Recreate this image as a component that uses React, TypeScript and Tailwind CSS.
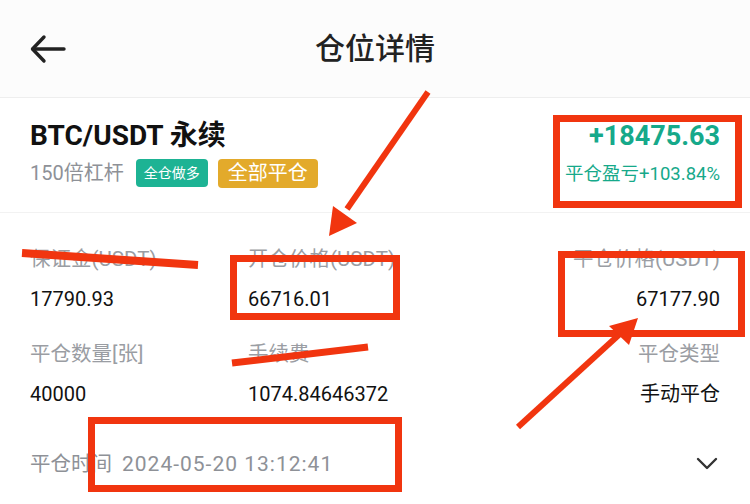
import React from "react";

const font = { fontFamily: "Roboto, 'Noto Sans CJK SC', sans-serif" };

function Cell({ label, value, align = "left", w }: { label: string; value: string; align?: "left" | "right"; w?: string }) {
  return (
    <div className={`${w ?? ""} flex flex-col ${align === "right" ? "items-end" : "items-start"}`}>
      <div className="text-[20.5px] leading-[28px] text-[#9a9da3]">{label}</div>
      <div className="mt-[12px] text-[20px] leading-[28px] text-[#111]">{value}</div>
    </div>
  );
}

export default function App() {
  const red = "#f1350f";
  return (
    <div className="relative w-[750px] h-[504px] overflow-hidden bg-white" style={font}>
      {/* header */}
      <div className="h-[98px] bg-[#fcfcfc] border-b border-[#eeeeee] flex items-center px-[30px]">
        <div className="w-[36px] h-[36px] flex items-center">
          <svg width="36" height="30" viewBox="0 0 36 30" fill="none" stroke="#222" strokeWidth="3.4" strokeLinecap="round" strokeLinejoin="round">
            <path d="M34 15H3" />
            <path d="M14 3L2.5 15L14 27" />
          </svg>
        </div>
        <div className="flex-1 text-center text-[30px] leading-[40px] text-[#222] font-medium">仓位详情</div>
        <div className="w-[36px]" />
      </div>

      {/* summary */}
      <div className="flex justify-between px-[30px] pt-[21px] pb-[23px] border-b border-[#f2f2f2]">
        <div className="flex flex-col">
          <div className="text-[28px] leading-[34px] font-bold text-[#111]">BTC/USDT 永续</div>
          <div className="mt-[5px] flex items-center h-[30px]">
            <span className="text-[20px] text-[#8e9197]">150倍杠杆</span>
            <span className="ml-[12px] h-[28px] px-[8px] flex items-center rounded-[4px] bg-[#1db394] text-white text-[14px]">全仓做多</span>
            <span className="ml-[10px] h-[29px] px-[10px] flex items-center rounded-[4px] bg-[#e3aa2b] text-white text-[20px]">全部平仓</span>
          </div>
        </div>
        <div className="flex flex-col items-end">
          <div className="text-[27px] leading-[34px] font-bold text-[#16a98a]">+18475.63</div>
          <div className="mt-[6px] text-[18.5px] leading-[30px] text-[#16a98a]">平仓盈亏+103.84%</div>
        </div>
      </div>

      {/* grid */}
      <div className="px-[30px] pt-[32px]">
        <div className="flex">
          <Cell w="w-[218px]" label="保证金(USDT)" value="17790.93" />
          <Cell w="flex-1" label="开仓价格(USDT)" value="66716.01" />
          <Cell align="right" label="平仓价格(USDT)" value="67177.90" />
        </div>
        <div className="flex mt-[27px]">
          <Cell w="w-[218px]" label="平仓数量[张]" value="40000" />
          <Cell w="flex-1" label="手续费" value="1074.84646372" />
          <Cell align="right" label="平仓类型" value="手动平仓" />
        </div>
        <div className="mt-[42px] flex items-center justify-between h-[28px]">
          <div className="text-[20.5px] leading-[28px] text-[#8e9197] flex items-center">
            <span>平仓时间</span>
            <span className="ml-[10px] text-[21px] tracking-[1px]">2024-05-20 13:12:41</span>
          </div>
          <svg width="22" height="14" viewBox="0 0 22 14" fill="none" stroke="#333" strokeWidth="2.4" strokeLinecap="round" strokeLinejoin="round" className="mr-[2px]">
            <path d="M2 2L11 11L20 2" />
          </svg>
        </div>
      </div>

      {/* annotations */}
      <svg className="absolute inset-0 pointer-events-none" width="750" height="504" viewBox="0 0 750 504">
        <g fill="none" stroke={red} strokeWidth="7">
          <rect x="556.5" y="118.5" width="182" height="86" />
          <rect x="233.5" y="258.5" width="163" height="58" />
          <rect x="561.5" y="254.5" width="180" height="79" />
          <rect x="91.5" y="420.5" width="307" height="68" />
        </g>
        <g stroke={red} strokeLinecap="butt">
          <line x1="22" y1="253" x2="198" y2="265" strokeWidth="8" />
          <line x1="232" y1="363" x2="368" y2="347" strokeWidth="7" />
          <line x1="428" y1="92" x2="347" y2="209" strokeWidth="6" />
          <line x1="518" y1="427" x2="622" y2="332" strokeWidth="6" />
        </g>
        <g fill={red}>
          <polygon points="329,236 333,206 357,223" />
          <polygon points="638,318 609,326 629,345" />
        </g>
      </svg>
    </div>
  );
}
